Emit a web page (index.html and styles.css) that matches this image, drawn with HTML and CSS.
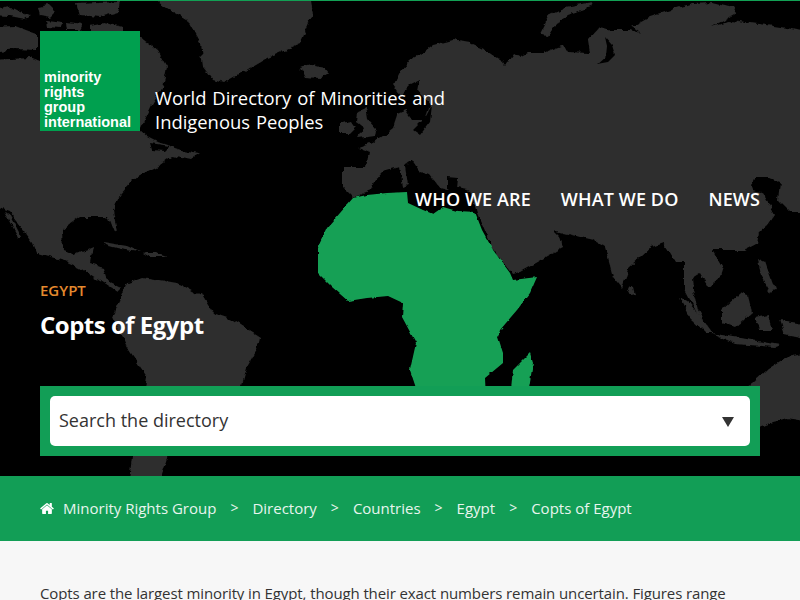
FILE: index.html
```html
<!DOCTYPE html>
<html lang="en">
<head>
<meta charset="utf-8">
<title>Copts of Egypt</title>
<link rel="stylesheet" href="styles.css">
</head>
<body>
<header class="hero">
  <svg class="map" viewBox="0 0 800 476" width="800" height="476" aria-hidden="true">
    <defs>
      <filter id="coast" filterUnits="userSpaceOnUse" x="-20" y="-20" width="840" height="516">
        <feTurbulence type="fractalNoise" baseFrequency="0.11" numOctaves="3" seed="7"/>
        <feDisplacementMap in="SourceGraphic" scale="6" xChannelSelector="R" yChannelSelector="G"/>
        <feGaussianBlur stdDeviation="0.4"/>
      </filter>
      <filter id="coast-fine" filterUnits="userSpaceOnUse" x="-20" y="-20" width="840" height="516">
        <feTurbulence type="fractalNoise" baseFrequency="0.14" numOctaves="2" seed="3"/>
        <feDisplacementMap in="SourceGraphic" scale="3" xChannelSelector="R" yChannelSelector="G"/>
        <feGaussianBlur stdDeviation="0.3"/>
      </filter>
    </defs>
    <g class="land">
      <polygon points="-10,10 8,6 20,12 30,16 25,19 10,16 -10,15"/>
      <polygon points="38,7 48,5 55,12 50,17 40,15"/>
      <polygon points="77,4 120,2 118,12 100,17 80,15"/>
      <polygon points="-10,27 15,26 37,34 37,50 15,49 -10,52"/>
      <polygon points="47,20 63,22 60,28 48,27"/>
      <polygon points="67,22 83,24 80,30 68,30"/>
      <polygon points="90,26 105,23 123,27 123,33 90,33"/>
      <polygon points="147,-5 167,8 187,20 200,43 203,67 213,80 223,83 243,72 267,58 300,43 313,12 310,-5"/>
      <polygon points="300,68 312,65 325,68 329,73 318,79 305,78"/>
      <polygon points="-10,60 30,58 40,62 140,37 157,50 167,67 163,87 152,105 140,130 148,137 158,142 170,146 182,150 200,153 190,160 172,156 160,165 140,175 133,180 120,195 113,210 117,233 112,230 107,217 80,217 62,230 63,250 75,255 93,247 90,263 103,267 107,280 122,287 117,292 103,283 80,268 63,260 37,253 33,243 10,212 -10,205"/>
      <polygon points="5,213 10,215 22,238 18,238"/>
      <polygon points="103,242 127,246 140,252 125,250 105,245"/>
      <polygon points="143,253 155,253 167,257 150,257"/>
      <polygon points="127,283 143,277 177,283 203,297 213,313 233,320 260,337 257,350 247,367 242,386 235,420 190,440 168,456 160,480 130,480 133,456 140,420 147,377 127,347 113,317 123,293"/>
      <polygon points="340,123 352,121 356,127 350,133 340,133"/>
      <polygon points="357,112 366,108 368,120 377,130 376,136 358,138 364,128 356,122"/>
      <polygon points="393,85 398,75 410,60 420,55 433,45 453,40 470,43 485,50 503,62 505,65 513,53 520,57 528,53 543,53 563,45 567,52 590,53 588,40 600,27 610,30 630,30 640,33 632,27 650,17 677,8 693,3 713,2 733,7 737,13 713,27 733,20 750,23 767,25 787,28 810,33 810,212 790,212 778,200 780,182 770,178 755,178 750,185 752,190 762,192 768,202 775,215 768,225 760,232 758,243 745,250 725,250 713,250 723,267 720,277 708,287 700,273 692,278 693,290 698,310 705,322 698,315 685,290 685,262 675,262 663,243 652,247 630,267 622,288 613,277 605,247 593,240 563,233 553,230 560,237 563,248 520,272 512,274 492,248 477,213 470,190 457,187 447,190 440,188 430,175 420,172 412,160 405,165 408,185 403,187 400,167 382,172 375,180 370,190 353,197 343,187 343,168 367,168 370,153 358,148 375,142 393,128 398,113 405,110 412,120 425,120 430,105 418,90 420,80 410,85 400,95"/>
      <polygon points="540,35 550,15 565,8 592,3 590,7 568,15 556,24 548,36"/>
      <polygon points="628,285 633,287 635,295 630,296 627,290"/>
      <polygon points="680,297 690,304 705,322 712,332 705,332 690,318"/>
      <polygon points="722,310 740,293 748,296 752,312 735,327 722,322"/>
      <polygon points="710,333 740,338 780,345 775,347 735,344"/>
      <polygon points="757,258 765,262 775,290 770,292 760,275"/>
      <polygon points="755,318 768,315 772,330 760,330"/>
      <polygon points="780,320 810,325 810,340 785,335"/>
      <polygon points="810,353 787,357 767,370 753,383 740,390 735,430 760,427 770,423 787,418 810,422"/>
    </g>
    <g class="inlet">
      <polygon points="605,37 612,45 615,55 608,62 597,64 606,56 607,46"/>
      <polygon points="447,177 458,178 457,189 447,189"/>
      <polygon points="413,130 425,118 432,105 430,122 420,135"/>
      <polygon points="150,143 170,146 165,151 152,150"/>
    </g>
    <g class="africa">
      <polygon points="353,198 367,195 387,193 407,192 408,203 423,210 433,214 443,207 457,211 475,212 482,230 493,250 510,273 513,280 537,277 530,293 517,310 500,330 498,337 503,353 503,363 485,378 486,400 420,400 410,370 416,343 402,317 403,303 388,296 367,298 348,301 332,287 318,273 318,247 327,228 340,213"/>
      <polygon points="530,353 533,363 527,400 510,400 513,370"/>
    </g>
  </svg>
  <div class="brand">
    <div class="logo">minority<br>rights<br>group<br>international</div>
    <p class="tagline">World Directory of Minorities and<br>Indigenous Peoples</p>
  </div>
  <nav class="nav">
    <a>Who we are</a>
    <a>What we do</a>
    <a>News</a>
  </nav>
  <div class="heading">
    <div class="country">Egypt</div>
    <h1 class="title">Copts of Egypt</h1>
  </div>
  <div class="search">
    <div class="select">
      <span>Search the directory</span>
      <svg class="caret" viewBox="0 0 12 10" width="12" height="10" aria-hidden="true"><polygon points="0,0 12,0 6,10"/></svg>
    </div>
  </div>
</header>
<nav class="crumbs">
  <svg class="home" viewBox="0 0 1664 1280" width="14" height="11" aria-hidden="true"><path d="M1408 736v480q0 26-19 45t-45 19h-384v-384h-256v384h-384q-26 0-45-19t-19-45v-480q0-1 .5-3t.5-3l575-474 575 474q1 2 1 6zm223-69-62 74q-8 9-21 11h-3q-13 0-21-7l-692-577-692 577q-12 8-24 7-13-2-21-11l-62-74q-8-10-7-23.500t11-21.500l719-599q32-26 76-26t76 26l244 204v-195q0-14 9-23t23-9h192q14 0 23 9t9 23v408l219 182q10 8 11 21.500t-7 23.500z"/></svg>
  <a>Minority Rights Group</a>
  <span class="sep">&gt;</span>
  <a>Directory</a>
  <span class="sep">&gt;</span>
  <a>Countries</a>
  <span class="sep">&gt;</span>
  <a>Egypt</a>
  <span class="sep">&gt;</span>
  <a>Copts of Egypt</a>
</nav>
<main class="content">
  <p>Copts are the largest minority in Egypt, though their exact numbers remain uncertain. Figures range</p>
</main>
</body>
</html>
```
FILE: styles.css
```css
* { box-sizing: border-box; }
html, body { margin: 0; padding: 0; }
body {
  font-family: "Open Sans", sans-serif;
  background: #f7f7f7;
  color: #333;
  overflow: hidden;
  height: 600px;
}
.hero {
  position: relative;
  height: 476px;
  background: #000;
  border-top: 1px solid #12a054;
  padding: 30px 40px 0;
  display: flex;
  flex-direction: column;
  color: #fff;
  overflow: hidden;
}
.map { position: absolute; left: 0; top: -1px; }
.land { fill: #2d2d2d; filter: url(#coast); }
.inlet { fill: #000; filter: url(#coast-fine); }
.africa { fill: #18a055; filter: url(#coast-fine); }
.brand, .nav, .heading, .search { position: relative; }
.brand { display: flex; align-items: flex-end; gap: 15px; }
.logo {
  width: 100px;
  height: 100px;
  background: #00a04f;
  padding: 39px 0 0 4px;
  font: bold 14.5px/15px "Liberation Sans", Arial, sans-serif;
  color: #fff;
  white-space: nowrap;
}
.tagline {
  margin: 0 0 -3px;
  font-size: 18.4px;
  line-height: 24px;
  word-spacing: 1.1px;
}
.nav {
  display: flex;
  justify-content: flex-end;
  gap: 30px;
  margin-top: 56px;
  font-size: 18px;
  font-weight: 600;
  line-height: 24px;
  letter-spacing: 0.12px;
  text-transform: uppercase;
}
.heading { margin-top: 69px; }
.country {
  font-size: 15px;
  font-weight: 600;
  line-height: 20px;
  color: #e58a2e;
  text-transform: uppercase;
}
.title {
  margin: 9px 0 0;
  font-size: 24px;
  font-weight: 700;
  line-height: 32px;
  letter-spacing: -0.5px;
}
.search {
  margin-top: 45px;
  height: 70px;
  padding: 10px;
  background: #129e56;
}
.select {
  display: flex;
  align-items: center;
  justify-content: space-between;
  height: 50px;
  padding: 0 16px 2px 9px;
  background: #fff;
  border-radius: 5px;
  color: #333;
  font-size: 18px;
}
.caret { fill: #333; margin-top: 4px; }
.crumbs {
  display: flex;
  align-items: center;
  height: 65px;
  padding: 0 40px 2px;
  background: #129e56;
  color: #e8f5ee;
  font-size: 15px;
}
.home { fill: #fff; margin: 2px 9px 0 0; }
.sep { margin: 0 14px; font-size: 14px; }
.content { padding: 40px 40px 0; }
.content p {
  margin: 0;
  font-size: 15px;
  line-height: 24px;
  letter-spacing: -0.11px;
  white-space: nowrap;
}
```
